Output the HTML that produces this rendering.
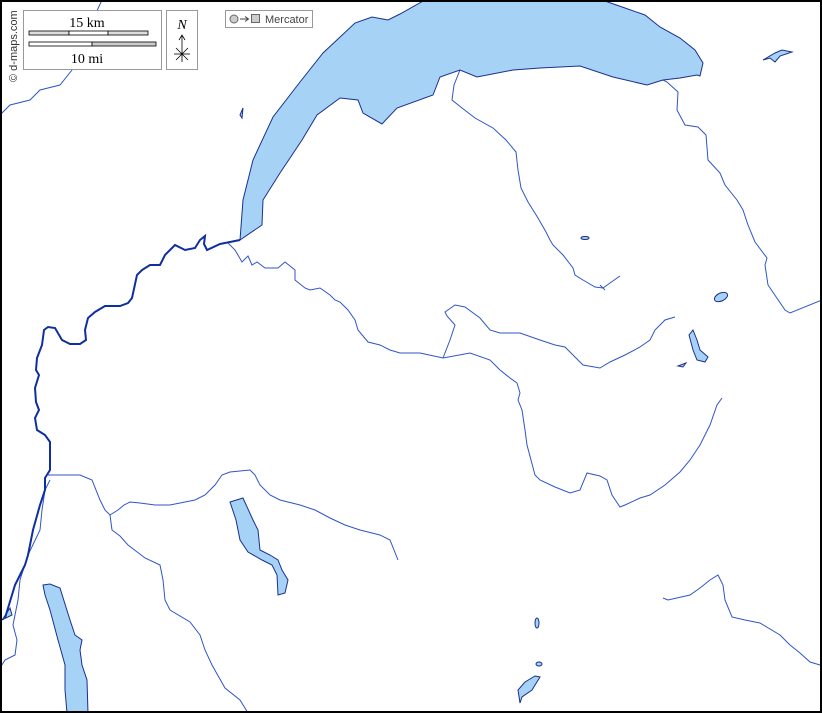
<!DOCTYPE html>
<html><head><style>
html,body{margin:0;padding:0;background:#fff;}
svg{display:block;}
</style></head><body>
<svg width="822" height="713" viewBox="0 0 822 713" xmlns="http://www.w3.org/2000/svg">
<rect x="0" y="0" width="822" height="713" fill="#fff"/>
<g fill="none" stroke="#2f55c8" stroke-width="1">
<path d="M102 0 L95 15 L72 30 L70 45 L72 70 L60 85 L40 90 L30 100 L10 105 L0 115"/>
<path d="M460 70 L454 85 L452 100 L462 108 L475 118 L493 128 L506 140 L516 152 L518 170 L521 188 L528 202 L538 218 L546 232 L550 240 L553 245 L563 255 L573 268 L575 275 L583 280 L595 287 L603 288 L610 283 L620 276"/>
<path d="M663 80 L667 82 L678 92 L677 110 L685 125 L698 127 L706 135 L708 160 L720 173 L725 185 L737 200 L743 210 L748 225 L755 242 L767 258 L765 265 L768 285 L785 310 L790 313 L822 300"/>
<path d="M228 243 L235 250 L242 262 L248 256 L252 265 L257 262 L265 268 L278 268 L285 262 L295 270 L295 280 L305 288 L310 290 L320 288 L330 295 L335 300 L340 302 L348 310 L355 320 L358 330 L368 342 L380 345 L390 350 L400 353 L420 353 L443 358 L470 353 L490 360 L500 370 L510 378 L517 383 L520 393 L518 400 L522 410 L525 430 L527 445 L535 475 L540 480 L555 487 L570 493 L580 490 L587 473 L600 476 L607 480 L612 495 L620 507 L625 505 L640 498 L650 495 L665 485 L680 472 L690 460 L700 445 L710 425 L717 405 L722 398"/>
<path d="M443 358 L450 340 L455 325 L447 316 L445 312 L455 305 L465 307 L480 318 L490 330 L500 333 L520 333 L540 340 L555 345 L565 347 L575 357 L583 365 L600 368 L610 362 L625 355 L640 347 L650 340 L655 330 L665 320 L675 317"/>
<path d="M48 475 L60 475 L80 475 L92 480 L100 500 L105 510 L110 515 L112 530 L120 536 L128 545 L145 558 L160 565 L163 580 L165 600 L170 610 L190 622 L200 635 L205 650 L212 665 L225 688 L240 700 L248 713"/>
<path d="M110 515 L118 510 L124 505 L130 502 L140 503 L155 505 L170 505 L185 502 L195 500 L205 495 L215 485 L222 475 L230 472 L250 470 L255 475 L260 485 L270 495 L280 500 L300 505 L315 510 L330 518 L345 525 L360 530 L380 535 L390 540 L398 560"/>
<path d="M0 668 L5 660 L15 655 L17 640 L13 625 L18 600 L20 580 L28 555 L40 530 L42 510 L45 490 L50 480"/>
<path d="M663 598 L668 600 L690 595 L700 588 L710 580 L718 575 L723 585 L725 600 L732 617 L745 620 L760 623 L780 635 L790 645 L800 653 L810 662 L820 665"/>
<path d="M600 285 L605 290"/>
</g>
<g fill="#a6d3f5" stroke="#1a2f8f" stroke-width="1">
<path d="M240 240 L243 200 L253 160 L273 117 L300 82 L323 53 L355 23 L372 17 L388 20 L400 14 L425 0 L602 0 L625 8 L645 15 L660 27 L680 38 L695 50 L703 63 L700 76 L697 75 L680 78 L663 80 L647 85 L613 77 L580 66 L540 68 L513 70 L477 77 L460 70 L440 77 L433 95 L397 108 L382 124 L363 113 L358 100 L340 98 L317 115 L302 140 L280 173 L263 200 L262 225 Z"/>
<path d="M230 502 L243 498 L253 520 L258 530 L260 550 L270 555 L278 560 L282 570 L288 580 L285 593 L278 595 L277 575 L272 565 L262 560 L248 552 L240 540 L236 520 Z"/>
<path d="M43 585 L50 584 L60 588 L70 620 L75 635 L82 640 L80 650 L82 665 L87 680 L88 713 L67 713 L65 690 L65 665 L58 640 L50 610 L45 595 Z"/>
<path d="M693 330 L697 340 L700 350 L708 357 L705 362 L697 360 L693 350 L689 335 Z"/>
<ellipse cx="721" cy="297" rx="7" ry="4" transform="rotate(-25 721 297)"/>
<path d="M535 676 L540 677 L532 690 L522 697 L520 703 L518 690 L525 682 Z"/>
<path d="M763 60 L775 53 L782 50 L792 52 L780 56 L775 62 L770 58 Z"/>
<ellipse cx="585" cy="238" rx="4" ry="1.5"/>
<ellipse cx="537" cy="623" rx="2" ry="5"/>
<ellipse cx="539" cy="664" rx="3" ry="2"/>
<path d="M678 366 L686 363 L683 367 Z"/>
<path d="M240 115 L243 108 L242 118 Z"/>
<path d="M2 620 L10 608 L12 615 Z"/>
</g>
<path d="M240 240 L220 244 L207 250 L204 244 L205 236 L200 240 L195 248 L185 250 L175 245 L165 255 L160 265 L150 265 L142 270 L137 275 L132 298 L128 303 L120 306 L105 306 L95 312 L88 318 L85 330 L86 340 L80 344 L70 344 L62 340 L55 328 L48 327 L44 330 L42 345 L37 358 L36 370 L39 375 L35 388 L36 402 L39 410 L35 418 L37 430 L45 435 L50 442 L50 470 L45 478 L45 490 L40 505 L33 530 L28 555 L25 565 L15 585 L5 618" fill="none" stroke="#0f2fa0" stroke-width="2"/>
<g stroke="#999" fill="#fff">
<rect x="23.5" y="10.5" width="138" height="59"/>
<rect x="166.5" y="10.5" width="31" height="59"/>
<rect x="225.5" y="10.5" width="87" height="17"/>
</g>
<text x="87" y="27" font-size="14" text-anchor="middle" fill="#000" font-family="Liberation Serif, serif">15 km</text>
<g stroke="#000" stroke-width="0.8">
<rect x="29" y="31" width="40" height="4" fill="#ddd"/>
<rect x="69" y="31" width="39" height="4" fill="#fff"/>
<rect x="108" y="31" width="40" height="4" fill="#ddd"/>
<rect x="29" y="42" width="63" height="4" fill="#fff"/>
<rect x="92" y="42" width="64" height="4" fill="#ccc"/>
<line x1="182" y1="36" x2="182" y2="62"/>
<line x1="174" y1="54" x2="190" y2="54"/>
<line x1="176" y1="48" x2="188" y2="60"/>
<line x1="188" y1="48" x2="176" y2="60"/>
</g>
<path d="M179 40 L182 35 L185 40" fill="none" stroke="#000" stroke-width="0.8"/>
<text x="87" y="63" font-size="14" text-anchor="middle" fill="#000" font-family="Liberation Serif, serif">10 mi</text>
<text x="182" y="29" font-size="14" font-style="italic" text-anchor="middle" fill="#000" font-family="Liberation Serif, serif">N</text>
<circle cx="234" cy="19" r="4" fill="#ccc" stroke="#666"/>
<line x1="240" y1="19" x2="248" y2="19" stroke="#444"/>
<path d="M245 16.5 L248.5 19 L245 21.5" fill="none" stroke="#444"/>
<rect x="251.5" y="14.5" width="8" height="8" fill="#ccc" stroke="#666"/>
<text x="265" y="23" font-size="11" fill="#444" font-family="Liberation Sans, sans-serif">Mercator</text>
<text transform="translate(17,82) rotate(-90)" font-size="11" fill="#333" font-family="Liberation Sans, sans-serif">© d-maps.com</text>
<rect x="1" y="1" width="820" height="711" fill="none" stroke="#000" stroke-width="2"/>
</svg>
</body></html>
